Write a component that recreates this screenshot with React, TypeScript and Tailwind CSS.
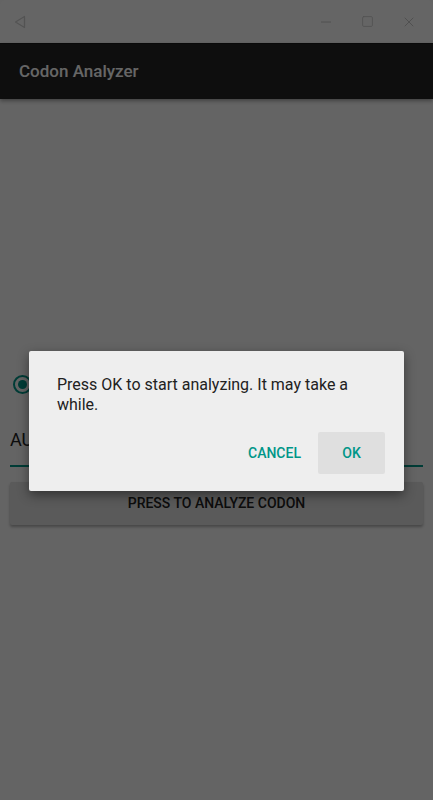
import { Minus, Square, X } from 'lucide-react'

const FONT = { fontFamily: 'Roboto, "Noto Sans", sans-serif' }

function WindowBar() {
  return (
    <div className="flex h-[43px] items-center rounded-t-[6px] bg-[#fdfdfd] px-[14px] text-[#d8d8d8]">
      <svg width="12" height="14" viewBox="0 0 12 14" className="text-[#d0d0d0]">
        <path d="M10.5 1.5 L1.5 7 L10.5 12.5 Z" fill="none" stroke="currentColor" strokeWidth="1.3" strokeLinejoin="round" />
      </svg>
      <div className="ml-auto flex items-center gap-[27px] pr-[2px]">
        <Minus size={16} strokeWidth={1.5} className="text-[#c8c8c8]" />
        <Square size={13} strokeWidth={1.6} className="text-[#c8c8c8]" />
        <X size={16} strokeWidth={1.5} className="text-[#c8c8c8]" />
      </div>
    </div>
  )
}

function AppBar() {
  return (
    <div className="flex h-[56px] items-center border-t border-[#1a1a1a] bg-[#232323] px-[19px] shadow-[0_2px_4px_rgba(0,0,0,0.35)]">
      <span className="text-[17px] font-medium text-white">Codon Analyzer</span>
    </div>
  )
}

function Content() {
  return (
    <div className="flex flex-col px-[10px] pt-[275px]">
      <div className="flex h-[20px] items-center pl-[3px]">
        <span className="flex h-[19px] w-[19px] items-center justify-center rounded-full border-2 border-[#009688]">
          <span className="h-[9px] w-[9px] rounded-full bg-[#009688]" />
        </span>
      </div>
      <div className="mt-[32px] border-b-2 border-[#009688] pb-[11px]">
        <span className="text-[18px] leading-[28px] text-[#212121]">AU</span>
      </div>
      <button className="mt-[15px] flex h-[43px] items-center justify-center rounded-[2px] bg-[#e0e0e0] text-[14px] font-medium text-[#212121] shadow-[0_2px_3px_rgba(0,0,0,0.3)]">
        PRESS TO ANALYZE CODON
      </button>
    </div>
  )
}

function ConfirmDialog() {
  return (
    <div className="absolute inset-0 flex items-start justify-center pt-[351px]">
      <div className="w-[375px] rounded-[2px] bg-[#eeeeee] shadow-[0_4px_12px_rgba(0,0,0,0.45)]">
        <p className="pl-[28px] pr-[24px] pt-[24px] text-[16px] leading-[20px] text-[#212121]">
          Press OK to start analyzing. It may take a while.
        </p>
        <div className="mt-[17px] flex items-center justify-end gap-[8px] pb-[17px] pr-[19px]">
          <span className="flex h-[42px] w-[71px] items-center justify-center text-[14px] font-medium text-[#009688]">
            CANCEL
          </span>
          <span className="flex h-[42px] w-[67px] items-center justify-center rounded-[2px] bg-[#dfdfdf] text-[14px] font-medium text-[#009688]">
            OK
          </span>
        </div>
      </div>
    </div>
  )
}

export default function App() {
  return (
    <div className="relative h-[800px] w-[433px] overflow-hidden bg-[#2a2a2a]" style={FONT}>
      <div className="flex h-full flex-col bg-[#fafafa]">
        <WindowBar />
        <AppBar />
        <Content />
      </div>
      <div className="absolute inset-0 bg-black/60" />
      <ConfirmDialog />
    </div>
  )
}
